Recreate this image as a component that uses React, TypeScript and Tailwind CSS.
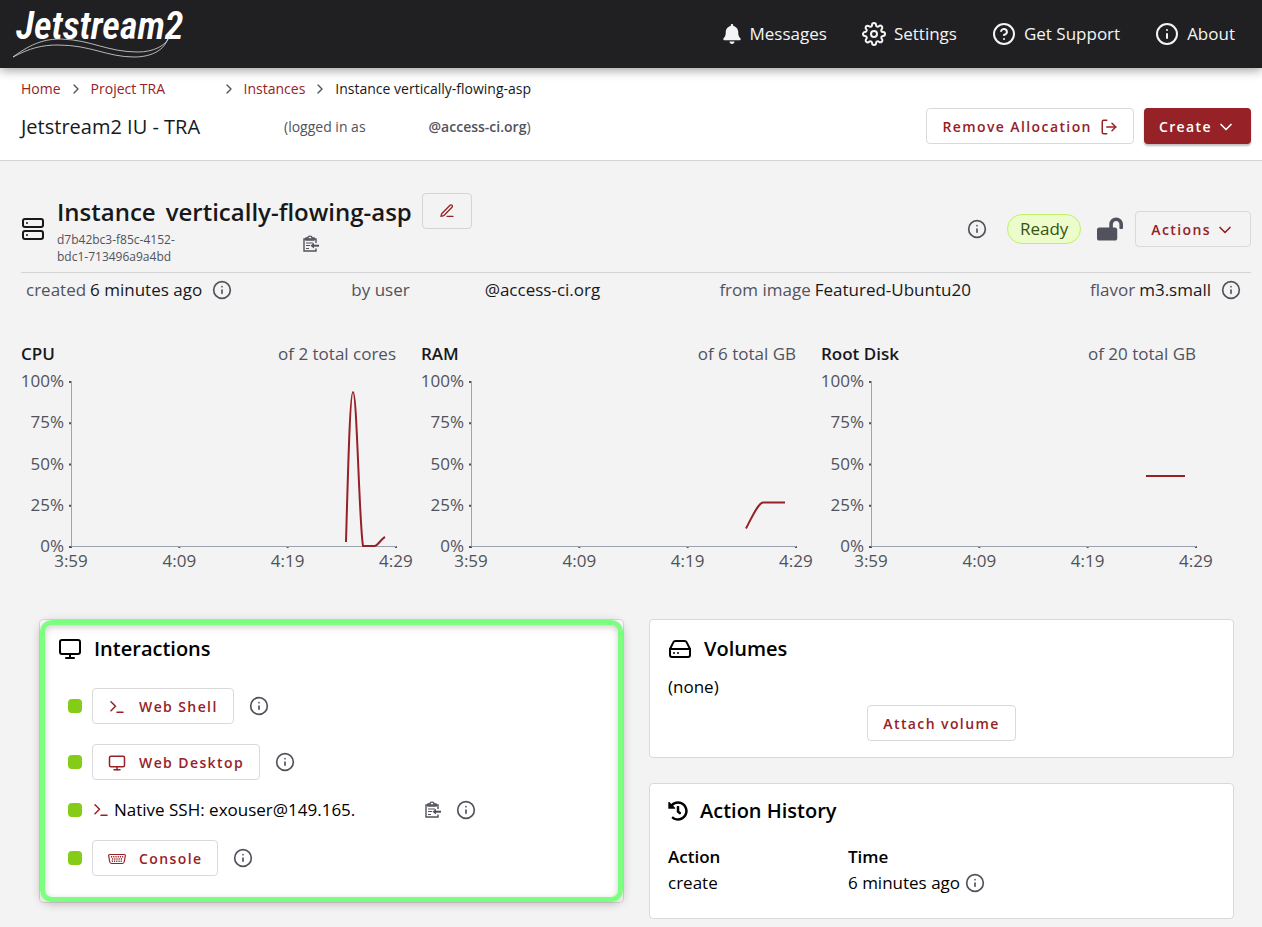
import React from 'react';
import {
    FiChevronDown,
    FiChevronRight,
    FiEdit3,
    FiHardDrive,
    FiHelpCircle,
    FiInfo,
    FiLogOut,
    FiMonitor,
    FiServer,
    FiSettings,
    FiTerminal,
} from 'react-icons/fi';
import { FaBell, FaHistory, FaLockOpen } from 'react-icons/fa';

interface Chart {
    title: string;
    total: string;
    line: string;
}

const charts: Chart[] = [
    {
        title: 'CPU',
        total: 'of 2 total cores',
        line: 'M325 161 C327 90 329 11 332 11 C336 11 338 140 342 165 L353 165 C356 166 360 158 364 156',
    },
    {
        title: 'RAM',
        total: 'of 6 total GB',
        line: 'M325 147.500 C330 138 337 122 342 121.500 L364 121.500',
    },
    {
        title: 'Root Disk',
        total: 'of 20 total GB',
        line: 'M325 95 L364 95',
    },
];

const yTicks = ['100%', '75%', '50%', '25%', '0%'];
const xTicks = ['3:59', '4:09', '4:19', '4:29'];

const Logo = () => (
    <svg width="190" height="60" viewBox="0 0 190 60" role="img" aria-label="Jetstream2">
        <text x="8" y="39" fill="#fff" fontSize="38" fontWeight="600" fontStyle="italic" fontFamily='"Roboto Condensed", "DejaVu Sans Condensed", sans-serif'>
            Jetstream2
        </text>
        <path d="M5 57 C24 43 37 39 53 39 C84 40 99 52 130 52 C145 52 158 46 162 36" fill="none" stroke="#ddd" strokeWidth="0.8" />
        <path d="M5 57 C22 48 34 45 50 45 C83 45 99 57 126 57 C145 57 157 49 160 38" fill="none" stroke="#ddd" strokeWidth="0.8" />
    </svg>
);

const PasteIcon = () => (
    <svg width="18" height="18" viewBox="0 0 18 18" fill="none" stroke="#52525b" strokeWidth="1.400">
        <path d="M14 8 V4 H2 V16 H14 V13.500" />
        <path d="M4 5 V3 H6 C6 0.500 10 0.500 10 3 H12 V5 Z" />
        <path d="M4 8 H11 M4 10.500 H8 M4 13.500 H7" strokeWidth="1.200" />
        <path d="M17 10.700 H11" strokeWidth="2" />
        <path d="M8.500 10.700 L12 7.800 V13.600 Z" fill="#52525b" stroke="none" />
    </svg>
);

const VgaIcon = () => (
    <svg width="18" height="12" viewBox="0 0 18 12" fill="none" stroke="#962126">
        <path d="M2 1.500 H16 C17 1.500 17.500 2 17.300 3 L16.300 8.500 C16 10 15.500 10.500 14.500 10.500 H3.500 C2.500 10.500 2 10 1.700 8.500 L0.700 3 C0.500 2 1 1.500 2 1.500 Z" strokeWidth="1.200" />
        <path d="M3 3.800 H15.500" strokeDasharray="1.200 1" strokeWidth="1.400" />
        <path d="M4 6 H15" strokeDasharray="1.200 1" strokeWidth="1.400" />
        <path d="M3.800 8.200 H14.500" strokeDasharray="1.200 1" strokeWidth="1.400" />
    </svg>
);

const Info = ({ label }: { label: string }) => (
    <button type="button" aria-label={label} className="shrink-0 text-zinc-600">
        <FiInfo size={20} />
    </button>
);

const OutlineButton = ({ children, className = '' }: { children: React.ReactNode; className?: string }) => (
    <button
        type="button"
        className={`flex h-9 items-center rounded border border-[#d9d9d9] px-[15px] pt-px text-sm font-semibold tracking-widest text-[#962126] ${className}`}
    >
        {children}
    </button>
);

const Header = () => (
    <header className="relative z-10 flex h-[68px] items-center justify-between bg-[#202022] pr-[27px] pl-2 text-zinc-100 shadow-[0_2px_10px_rgba(0,0,0,0.4)]">
        <a href="#home" className="self-start">
            <Logo />
        </a>
        <nav className="flex items-center gap-[35px] text-[17px]">
            <a href="#messages" className="flex items-center gap-2">
                <FaBell size={20} />
                Messages
            </a>
            <a href="#settings" className="flex items-center gap-2">
                <FiSettings size={24} />
                Settings
            </a>
            <a href="#support" className="flex items-center gap-2">
                <FiHelpCircle size={24} />
                Get Support
            </a>
            <a href="#about" className="flex items-center gap-2">
                <FiInfo size={24} />
                About
            </a>
        </nav>
    </header>
);

const ProjectBar = () => (
    <section className="border-b border-[#d4d4d4] bg-white pr-[11px] pb-4 pl-[21px]">
        <nav aria-label="Breadcrumb" className="flex h-10 items-center pt-[2px] text-sm text-[#962126]">
            <a href="#home">Home</a>
            <FiChevronRight size={16} className="mx-[7px] text-zinc-600" />
            <a href="#project" className="w-[130px]">Project TRA</a>
            <FiChevronRight size={16} className="mr-[7px] text-zinc-600" />
            <a href="#instances">Instances</a>
            <FiChevronRight size={16} className="mx-[7px] text-zinc-600" />
            <span className="text-zinc-900">Instance vertically-flowing-asp</span>
        </nav>
        <div className="flex items-center justify-between">
            <div className="flex items-center pt-[2px]">
                <h1 className="w-[263px] text-xl">Jetstream2 IU - TRA</h1>
                <p className="flex gap-[63px] text-sm text-zinc-600">
                    <span>(logged in as</span>
                    <span><b className="font-semibold">@access-ci.org</b>)</span>
                </p>
            </div>
            <div className="flex gap-[10px]">
                <OutlineButton className="gap-2">
                    Remove Allocation
                    <FiLogOut size={18} />
                </OutlineButton>
                <button type="button" className="flex h-9 items-center gap-1 rounded bg-[#962126] px-[15px] pt-px text-sm font-semibold tracking-widest text-white shadow-[0_2px_2px_rgba(0,0,0,0.25)]">
                    Create
                    <FiChevronDown size={20} />
                </button>
            </div>
        </div>
    </section>
);

const InstanceHeading = () => (
    <div className="flex items-center justify-between border-b border-[#d4d4d4] pb-[7px]">
        <div className="flex items-center gap-3">
            <FiServer size={24} />
            <div>
                <div className="flex items-center gap-[10px]">
                    <h2 className="flex gap-[10px] pt-[2px] text-2xl font-semibold">
                        <span>Instance</span>
                        <span>vertically-flowing-asp</span>
                    </h2>
                    <button type="button" aria-label="Rename instance" className="flex h-9 w-[50px] items-center justify-center rounded border border-[#d4d4d4] text-[#962126]">
                        <FiEdit3 size={16} />
                    </button>
                </div>
                <div className="mt-[2px] flex items-center text-xs leading-[17px] text-zinc-600">
                    <p className="w-[245px]">
                        d7b42bc3-f85c-4152-
                        <br />
                        bdc1-713496a9a4bd
                    </p>
                    <button type="button" aria-label="Copy instance ID" className="pb-2">
                        <PasteIcon />
                    </button>
                </div>
            </div>
        </div>
        <div className="flex items-center">
            <Info label="Status details" />
            <span className="mr-4 ml-5 rounded-full border border-[#bef264] bg-[#ecfccb] px-3 py-[2px] text-[#365314]">Ready</span>
            <FaLockOpen size={26} className="mr-3 text-zinc-600" />
            <OutlineButton className="gap-1">
                Actions
                <FiChevronDown size={20} />
            </OutlineButton>
        </div>
    </div>
);

const Facts = () => (
    <dl className="flex h-[34px] flex-wrap items-center justify-between pr-[10px] pl-[5px]">
        <div className="flex items-center gap-1">
            <dt className="text-zinc-600">created</dt>
            <dd className="flex items-center gap-[10px]">
                6 minutes ago
                <Info label="Creation time" />
            </dd>
        </div>
        <div className="flex items-center gap-[75px]">
            <dt className="text-zinc-600">by user</dt>
            <dd>@access-ci.org</dd>
        </div>
        <div className="flex items-center gap-1">
            <dt className="text-zinc-600">from image</dt>
            <dd>Featured-Ubuntu20</dd>
        </div>
        <div className="flex items-center gap-1">
            <dt className="text-zinc-600">flavor</dt>
            <dd className="flex items-center gap-[10px]">
                m3.small
                <Info label="Flavor details" />
            </dd>
        </div>
    </dl>
);

const UsageChart = ({ chart }: { chart: Chart }) => (
    <figure className="w-[375px]">
        <figcaption className="flex justify-between">
            <span className="font-semibold">{chart.title}</span>
            <span className="text-zinc-600">{chart.total}</span>
        </figcaption>
        <svg width="375" height="210" viewBox="0 -15 375 210" className="block overflow-visible" fontSize="17" fill="#52525b">
            {yTicks.map((tick, i) => (
                <g key={tick}>
                    <text x="43" y={i * 41.25 + 6} textAnchor="end">{tick}</text>
                    <rect x="48" y={i * 41.25} width="2" height="2" />
                </g>
            ))}
            {xTicks.map((tick, i) => (
                <g key={tick}>
                    <text x={50 + i * 108.3} y="186" textAnchor="middle">{tick}</text>
                    <rect x={49 + i * 108.3} y="165" width="2" height="2" />
                </g>
            ))}
            <path d="M50.500 0 V165.500 H375" fill="none" stroke="#9ca3af" />
            <path d={chart.line} fill="none" stroke="#962126" strokeWidth="2" />
        </svg>
    </figure>
);

const StatusDot = () => <span className="mr-[10px] size-[14px] shrink-0 rounded bg-[#84cc16]" />;

const Interactions = () => (
    <section className="relative rounded border border-[#d9d9d9] bg-white px-[18px] pt-[15px] pb-[26px]">
        {/* Highlight frame */}
        <div className="pointer-events-none absolute inset-0 rounded-xl border-5 border-[#7aff80] shadow-[0_2px_8px_rgba(90,50,50,0.3),inset_0_2px_6px_rgba(90,50,50,0.25)]" />
        <h3 className="flex items-center gap-3 text-xl font-semibold">
            <FiMonitor size={24} />
            Interactions
        </h3>
        <ul className="mt-[25px] flex flex-col gap-5 pl-[10px]">
            <li className="flex items-center">
                <StatusDot />
                <OutlineButton className="mr-[15px] gap-[13px]">
                    <FiTerminal size={18} />
                    Web Shell
                </OutlineButton>
                <Info label="About Web Shell" />
            </li>
            <li className="flex items-center">
                <StatusDot />
                <OutlineButton className="mr-[15px] gap-[13px]">
                    <FiMonitor size={18} />
                    Web Desktop
                </OutlineButton>
                <Info label="About Web Desktop" />
            </li>
            <li className="flex h-5 items-center">
                <StatusDot />
                <FiTerminal size={18} className="mr-1 text-[#962126]" />
                <span className="w-[310px]">Native SSH: exouser@149.165.</span>
                <button type="button" aria-label="Copy SSH command" className="mr-[14px]">
                    <PasteIcon />
                </button>
                <Info label="About Native SSH" />
            </li>
            <li className="flex items-center">
                <StatusDot />
                <OutlineButton className="mr-[15px] gap-[13px]">
                    <VgaIcon />
                    Console
                </OutlineButton>
                <Info label="About Console" />
            </li>
        </ul>
    </section>
);

const Volumes = () => (
    <section className="rounded border border-[#d9d9d9] bg-white px-[18px] pt-[15px] pb-4">
        <h3 className="flex items-center gap-3 text-xl font-semibold">
            <FiHardDrive size={24} />
            Volumes
        </h3>
        <p className="mt-3">(none)</p>
        <div className="mt-[6px] flex justify-center">
            <OutlineButton>Attach volume</OutlineButton>
        </div>
    </section>
);

const ActionHistory = () => (
    <section className="rounded border border-[#d9d9d9] bg-white px-[18px] pt-[13px] pb-[21px]">
        <h3 className="flex items-center gap-3 text-xl font-semibold">
            <FaHistory size={20} />
            Action History
        </h3>
        <table className="mt-5 text-left">
            <thead>
                <tr>
                    <th className="w-[180px] font-semibold">Action</th>
                    <th className="font-semibold">Time</th>
                </tr>
            </thead>
            <tbody>
                <tr>
                    <td>create</td>
                    <td className="flex h-7 items-center gap-[5px]">
                        6 minutes ago
                        <Info label="Action time" />
                    </td>
                </tr>
            </tbody>
        </table>
    </section>
);

const App = () => {
    return (
        <div className='min-h-screen bg-[#f3f3f3] font-["Open_Sans",sans-serif] text-[17px] leading-6 text-zinc-900'>
            <Header />
            <ProjectBar />
            <main className="pt-8 pr-[11px] pb-2 pl-[21px]">
                <InstanceHeading />
                <Facts />
                <div className="mt-[35px] flex flex-wrap gap-x-[25px] gap-y-6">
                    {charts.map((chart) => (
                        <UsageChart key={chart.title} chart={chart} />
                    ))}
                </div>
                <div className="mt-[43px] grid grid-cols-2 items-start gap-[25px] pr-[17px] pl-[18px] text-black">
                    <Interactions />
                    <div className="flex flex-col gap-[25px]">
                        <Volumes />
                        <ActionHistory />
                    </div>
                </div>
            </main>
        </div>
    );
};

export default App;
